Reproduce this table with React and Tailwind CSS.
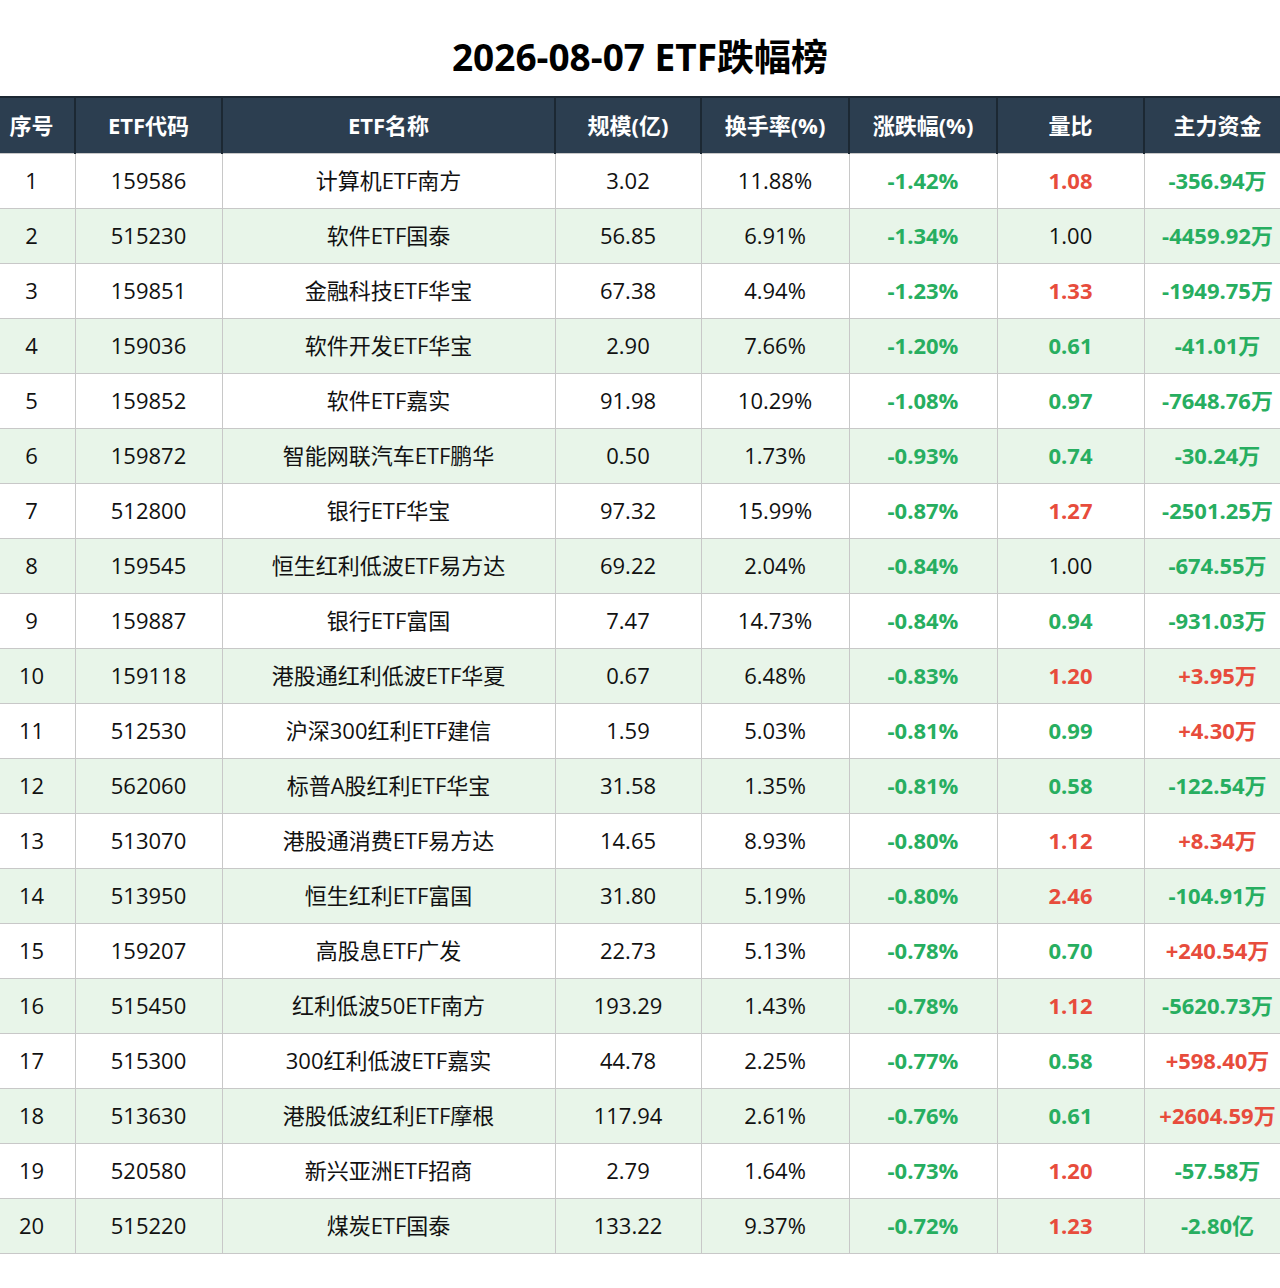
import React from 'react';

// 列宽与表头
const COLUMNS = [
    { key: 'rank', label: '序号', width: 'w-[87px]' },
    { key: 'code', label: 'ETF代码', width: 'w-[147px]' },
    { key: 'name', label: 'ETF名称', width: 'w-[333px]' },
    { key: 'scale', label: '规模(亿)', width: 'w-[146px]' },
    { key: 'turnover', label: '换手率(%)', width: 'w-[148px]' },
    { key: 'change', label: '涨跌幅(%)', width: 'w-[148px]' },
    { key: 'ratio', label: '量比', width: 'w-[147px]' },
    { key: 'flow', label: '主力资金', width: 'w-[147px]' },
];

const ROWS = [
    ['159586', '计算机ETF南方', '3.02', '11.88%', '-1.42%', '1.08', '-356.94万'],
    ['515230', '软件ETF国泰', '56.85', '6.91%', '-1.34%', '1.00', '-4459.92万'],
    ['159851', '金融科技ETF华宝', '67.38', '4.94%', '-1.23%', '1.33', '-1949.75万'],
    ['159036', '软件开发ETF华宝', '2.90', '7.66%', '-1.20%', '0.61', '-41.01万'],
    ['159852', '软件ETF嘉实', '91.98', '10.29%', '-1.08%', '0.97', '-7648.76万'],
    ['159872', '智能网联汽车ETF鹏华', '0.50', '1.73%', '-0.93%', '0.74', '-30.24万'],
    ['512800', '银行ETF华宝', '97.32', '15.99%', '-0.87%', '1.27', '-2501.25万'],
    ['159545', '恒生红利低波ETF易方达', '69.22', '2.04%', '-0.84%', '1.00', '-674.55万'],
    ['159887', '银行ETF富国', '7.47', '14.73%', '-0.84%', '0.94', '-931.03万'],
    ['159118', '港股通红利低波ETF华夏', '0.67', '6.48%', '-0.83%', '1.20', '+3.95万'],
    ['512530', '沪深300红利ETF建信', '1.59', '5.03%', '-0.81%', '0.99', '+4.30万'],
    ['562060', '标普A股红利ETF华宝', '31.58', '1.35%', '-0.81%', '0.58', '-122.54万'],
    ['513070', '港股通消费ETF易方达', '14.65', '8.93%', '-0.80%', '1.12', '+8.34万'],
    ['513950', '恒生红利ETF富国', '31.80', '5.19%', '-0.80%', '2.46', '-104.91万'],
    ['159207', '高股息ETF广发', '22.73', '5.13%', '-0.78%', '0.70', '+240.54万'],
    ['515450', '红利低波50ETF南方', '193.29', '1.43%', '-0.78%', '1.12', '-5620.73万'],
    ['515300', '300红利低波ETF嘉实', '44.78', '2.25%', '-0.77%', '0.58', '+598.40万'],
    ['513630', '港股低波红利ETF摩根', '117.94', '2.61%', '-0.76%', '0.61', '+2604.59万'],
    ['520580', '新兴亚洲ETF招商', '2.79', '1.64%', '-0.73%', '1.20', '-57.58万'],
    ['515220', '煤炭ETF国泰', '133.22', '9.37%', '-0.72%', '1.23', '-2.80亿'],
];

// 量比: >1 红色, =1 黑色, <1 绿色
const ratioClass = (v) => {
    const n = parseFloat(v);
    if (n > 1) return 'text-[#e74c3c] font-bold';
    if (n < 1) return 'text-[#27ae60] font-bold';
    return 'text-[#111111]';
};

const flowClass = (v) => (v.startsWith('+') ? 'text-[#e74c3c]' : 'text-[#27ae60]');

const cell = 'h-[55px] border border-[#c8c8c8] text-center align-middle p-0 whitespace-nowrap';

const App = () => {
    return (
        <div
            className="w-[1280px] h-[1288px] bg-white overflow-hidden"
            style={{ fontFamily: '"Open Sans", "Noto Sans CJK SC", sans-serif' }}
        >
            {/* 标题 */}
            <div className="h-[96px] flex items-center justify-center pt-[16px]">
                <h1 className="text-[37px] font-bold text-black leading-none">2026-08-07 ETF跌幅榜</h1>
            </div>

            {/* 表格 (左右两侧被裁切) */}
            <table className="-ml-[13px] w-[1303px] table-fixed border-collapse text-[22px] text-[#111111]">
                <thead>
                    <tr className="bg-[#2c3e50]">
                        {COLUMNS.map((col) => (
                            <th
                                key={col.key}
                                className={`${col.width} h-[56px] border-x-2 border-t-2 border-b-0 border-[#1c2833] text-white font-bold text-center align-middle p-0 whitespace-nowrap`}
                            >
                                {col.label}
                            </th>
                        ))}
                    </tr>
                </thead>
                <tbody>
                    {ROWS.map((row, i) => (
                        <tr key={row[0]} className={i % 2 === 1 ? 'bg-[#e8f5e9]' : 'bg-white'}>
                            <td className={cell}>{i + 1}</td>
                            <td className={cell}>{row[0]}</td>
                            <td className={cell}>{row[1]}</td>
                            <td className={cell}>{row[2]}</td>
                            <td className={cell}>{row[3]}</td>
                            <td className={`${cell} text-[#27ae60] font-bold`}>{row[4]}</td>
                            <td className={`${cell} ${ratioClass(row[5])}`}>{row[5]}</td>
                            <td className={`${cell} ${flowClass(row[6])} font-bold`}>{row[6]}</td>
                        </tr>
                    ))}
                </tbody>
            </table>
        </div>
    );
};

export default App;
